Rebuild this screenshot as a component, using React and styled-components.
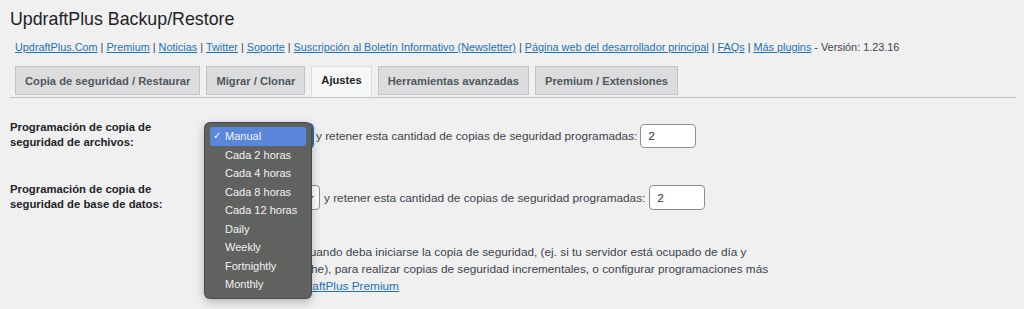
import React from "react";
import styled, { createGlobalStyle } from "styled-components";

const Global = createGlobalStyle`
  html, body { margin: 0; padding: 0; background: #f0f0f1; }
  body { font-family: "Liberation Sans", Arial, sans-serif; color: #3c434a; }
`;

const Page = styled.div`
  padding: 8px 8px 0 10px;
  height: 309px;
  box-sizing: border-box;
  overflow: hidden;
`;

const Title = styled.h1`
  margin: 0;
  font-size: 17.8px;
  line-height: 22px;
  font-weight: 400;
  color: #1d2327;
`;

const LinksLine = styled.p`
  margin: 10px 0 0 5px;
  font-size: 10.85px;
  line-height: 14px;
  color: #3c434a;
  white-space: nowrap;
`;

const Link = styled.a`
  color: #2271b1;
  text-decoration: underline;
`;

const Sep = styled.span`
  color: #3c434a;
  margin: 0 3px;
`;

const TabBar = styled.nav`
  display: flex;
  align-items: flex-start;
  gap: 6px;
  margin-top: 12px;
  padding-left: 5px;
  border-bottom: 1px solid #c3c4c7;
`;

const Tab = styled.div`
  box-sizing: border-box;
  height: ${(p) => (p.$active ? 31 : 29)}px;
  padding: 0 9px;
  display: flex;
  align-items: ${(p) => (p.$active ? "flex-start" : "center")};
  padding-top: ${(p) => (p.$active ? 7 : 0)}px;
  font-size: 11.2px;
  font-weight: 700;
  color: ${(p) => (p.$active ? "#1d2327" : "#50575e")};
  background: ${(p) => (p.$active ? "#f6f7f7" : "#dcdcde")};
  border: 1px solid ${(p) => (p.$active ? "#dcdcde" : "#c3c4c7")};
  border-bottom: ${(p) => (p.$active ? "none" : "1px solid #c3c4c7")};
  white-space: nowrap;
`;

const Form = styled.div`
  position: relative;
  margin-top: 21px;
  display: grid;
  grid-template-columns: 202px 1fr;
  row-gap: 31px;
`;

const Label = styled.div`
  padding-top: 1px;
  font-size: 11.3px;
  line-height: 15px;
  font-weight: 700;
  color: #1d2327;
`;

const Controls = styled.div`
  display: flex;
  align-items: center;
  gap: ${(p) => p.$gap}px;
  padding-top: ${(p) => p.$top}px;
  font-size: 11.8px;
  color: #3c434a;
  white-space: nowrap;
`;

const Select = styled.div`
  box-sizing: border-box;
  width: ${(p) => p.$w}px;
  height: ${(p) => p.$h}px;
  padding: 0 4px 0 8px;
  display: flex;
  align-items: center;
  justify-content: space-between;
  background: #fff;
  border: 1px solid ${(p) => (p.$focus ? "#2271b1" : "#8c8f94")};
  box-shadow: ${(p) => (p.$focus ? "0 0 0 1px #2271b1" : "none")};
  border-radius: 4px;
  font-size: 11.8px;
  color: #2c3338;
`;

const Input = styled.div`
  box-sizing: border-box;
  width: 56px;
  height: ${(p) => p.$h}px;
  padding-left: 7px;
  display: flex;
  align-items: center;
  background: #fff;
  border: 1px solid #8c8f94;
  border-radius: 4px;
  font-size: 11.8px;
  color: #2c3338;
`;

const Description = styled.p`
  grid-column: 1 / span 2;
  margin: 0;
  padding: 1px 0 0 204px;
  font-size: 11.8px;
  line-height: 16.8px;
  color: #3c434a;
`;

const Line = styled.span`
  display: block;
  white-space: nowrap;
`;

const Popup = styled.ul`
  position: absolute;
  left: 194px;
  top: 3px;
  width: 108px;
  box-sizing: border-box;
  margin: 0;
  padding: 4px 5px;
  list-style: none;
  background: #606260;
  border-radius: 6px;
  border: 1px solid rgba(0, 0, 0, 0.25);
  box-shadow: 0 3px 10px rgba(0, 0, 0, 0.25);
`;

const Option = styled.li`
  position: relative;
  height: 18.5px;
  line-height: 18.5px;
  padding-left: 15px;
  border-radius: 3px;
  font-size: 11px;
  color: #f2f2f2;
  background: ${(p) => (p.$selected ? "#5a86dc" : "transparent")};
`;

const Check = styled.span`
  position: absolute;
  left: 3px;
  top: 0;
  font-size: 10px;
  color: #fff;
`;

const Chevron = () => (
  <svg width="9" height="9" viewBox="0 0 10 10">
    <path d="M2 3.5 L5 6.5 L8 3.5" fill="none" stroke="#50575e" strokeWidth="1.4" />
  </svg>
);

const links = [
  "UpdraftPlus.Com",
  "Premium",
  "Noticias",
  "Twitter",
  "Soporte",
  "Suscripción al Boletín Informativo (Newsletter)",
  "Página web del desarrollador principal",
  "FAQs",
  "Más plugins",
];

const tabs = [
  "Copia de seguridad / Restaurar",
  "Migrar / Clonar",
  "Ajustes",
  "Herramientas avanzadas",
  "Premium / Extensiones",
];

const options = [
  "Manual",
  "Cada 2 horas",
  "Cada 4 horas",
  "Cada 8 horas",
  "Cada 12 horas",
  "Daily",
  "Weekly",
  "Fortnightly",
  "Monthly",
];

export default function App() {
  return (
    <>
      <Global />
      <Page>
        <Title>UpdraftPlus Backup/Restore</Title>
        <LinksLine>
          {links.map((l, i) => (
            <React.Fragment key={l}>
              {i > 0 && <Sep>|</Sep>}
              <Link href="#">{l}</Link>
            </React.Fragment>
          ))}
          {" - Versión: 1.23.16"}
        </LinksLine>
        <TabBar>
          {tabs.map((t) => (
            <Tab key={t} $active={t === "Ajustes"}>
              {t}
            </Tab>
          ))}
        </TabBar>
        <Form>
          <Label>
            Programación de copia de
            <br />
            seguridad de archivos:
          </Label>
          <Controls $gap={3} $top={3}>
            <Select $w={101} $h={24} $focus>
              <span>Manual</span>
              <Chevron />
            </Select>
            <span>y retener esta cantidad de copias de seguridad programadas:</span>
            <Input $h={24}>2</Input>
          </Controls>

          <Label>
            Programación de copia de
            <br />
            seguridad de base de datos:
          </Label>
          <Controls $gap={4} $top={2}>
            <Select $w={108} $h={25}>
              <span>Manual</span>
              <Chevron />
            </Select>
            <span>y retener esta cantidad de copias de seguridad programadas:</span>
            <Input $h={25}>2</Input>
          </Controls>

          <Description>
            <Line>
              Para fijar la hora cuando deba iniciarse la copia de seguridad, (ej. si tu
              servidor está ocupado de día y
            </Line>
            <Line>
              la prefieres de noche), para realizar copias de seguridad incrementales, o
              configurar programaciones más
            </Line>
            <Line>
              complejas en <Link href="#">UpdraftPlus Premium</Link>
            </Line>
          </Description>

          <Popup>
            {options.map((o, i) => (
              <Option key={o} $selected={i === 0}>
                {i === 0 && <Check>✓</Check>}
                {o}
              </Option>
            ))}
          </Popup>
        </Form>
      </Page>
    </>
  );
}
